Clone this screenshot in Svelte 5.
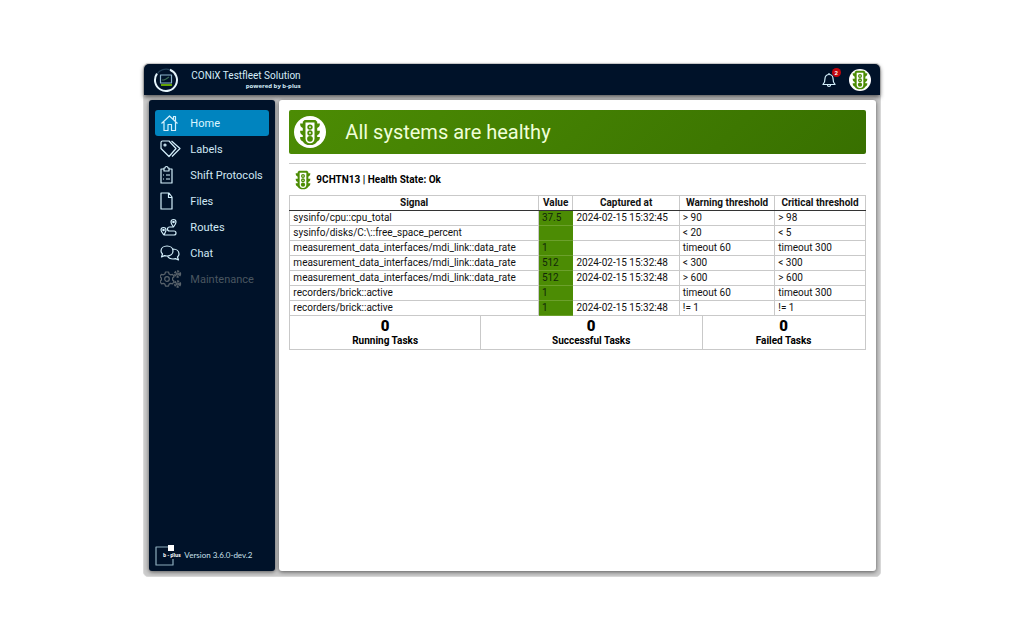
<script>
    const menu = [
        {name: 'Home', icon: 'home', active: true},
        {name: 'Labels', icon: 'labels'},
        {name: 'Shift Protocols', icon: 'protocols'},
        {name: 'Files', icon: 'files'},
        {name: 'Routes', icon: 'routes'},
        {name: 'Chat', icon: 'chat'},
        {name: 'Maintenance', icon: 'maintenance', disabled: true}
    ]

    const signals = [
        {signal: 'sysinfo/cpu::cpu_total', value: '37.5', captured: '2024-02-15 15:32:45', warning: '> 90', critical: '> 98'},
        {signal: 'sysinfo/disks/C:\\::free_space_percent', value: '', captured: '', warning: '< 20', critical: '< 5'},
        {signal: 'measurement_data_interfaces/mdi_link::data_rate', value: '1', captured: '', warning: 'timeout 60', critical: 'timeout 300'},
        {signal: 'measurement_data_interfaces/mdi_link::data_rate', value: '512', captured: '2024-02-15 15:32:48', warning: '< 300', critical: '< 300'},
        {signal: 'measurement_data_interfaces/mdi_link::data_rate', value: '512', captured: '2024-02-15 15:32:48', warning: '> 600', critical: '> 600'},
        {signal: 'recorders/brick::active', value: '1', captured: '', warning: 'timeout 60', critical: 'timeout 300'},
        {signal: 'recorders/brick::active', value: '1', captured: '2024-02-15 15:32:48', warning: '!= 1', critical: '!= 1'}
    ]

    const tasks = [
        {name: 'Running Tasks', count: 0},
        {name: 'Successful Tasks', count: 0},
        {name: 'Failed Tasks', count: 0}
    ]
</script>

{#snippet trafficLight()}
    <svg class="trafficLight" viewBox="0 0 24 30" aria-hidden="true">
        <path class="solid" d="M6 1h12l2 2v2h3c0 3-1 4-3 5v3h3c0 3-1 4-3 5v2h3c0 3-1 4-3 5-2 3-4 4-8 4s-6-1-8-4c-2-1-3-2-3-5h3v-2c-2-1-3-2-3-5h3v-3c-2-1-3-2-3-5h3V3z"/>
        <path class="hole" d="M7 4h10v18c0 3-2 5-5 5s-5-2-5-5z"/>
        <circle class="lamp" cx="12" cy="9" r="2"/>
        <circle class="lamp" cx="12" cy="15.500" r="2"/>
        <circle class="solid" cx="12" cy="22" r="3.200"/>
    </svg>
{/snippet}

{#snippet menuIcon(icon)}
    <svg class="menuIcon" viewBox="0 0 22 20" aria-hidden="true">
        {#if icon === 'home'}
            <path d="M1.500 10.500L9.500 3l8 7.500M4 9v8.500h4v-6h3.500v6h4V9M13.500 6V3.500h2V8"/>
        {:else if icon === 'labels'}
            <path d="M1 3.500Q1 2 2.500 2H9l7 7.500-7 8-8-8zM11.500 2l8.500 7.500-8 8"/>
            <circle cx="5" cy="6" r="1"/>
        {:else if icon === 'protocols'}
            <path d="M4 4H1v14h11V4h-3M4 3h1a1.500 1.500 0 0 1 3 0h1v3H4zM6 10h4M6 14h4M3 10h1M3 14h1"/>
        {:else if icon === 'files'}
            <path d="M1 2h8l3 4v12H1zM8.500 2v4.500H12"/>
        {:else if icon === 'routes'}
            <path d="M13.500 10C11.500 7.500 11 6.500 11 5a2.500 2.500 0 0 1 5 0c0 1.500-.5 2.500-2.500 5H9.500a2 2 0 0 0 0 4H14a2 2 0 0 1 0 4H4C2 15.500 1 14.500 1 13a2.500 2.500 0 0 1 5 0c0 1.500-1 2.500-2 5"/>
            <circle cx="13.500" cy="5" r=".7"/>
            <circle cx="3.500" cy="13" r=".7"/>
        {:else if icon === 'chat'}
            <path d="M13 8c0 3-2.500 5-6 5-1 0-1.500 0-2.500-.4L1.500 14l1-3C1.500 10 1 9 1 8c0-3 2.500-5 6-5s6 2 6 5zM13 6c3.500 0 6 2 6 5 0 1-.5 2-1.500 3l1 3-3-1.400c-1 .4-1.500.4-2.500.4-3 0-4.500-1-5.500-3"/>
        {:else}
            <circle cx="7" cy="10" r="2.300"/>
            <path d="M5.500 3h3l.6 2 1.500.8 2-.5 1.500 2.500L12.600 9v2l1.500 1.300-1.500 2.500-2-.5-1.500.8-.6 2h-3l-.6-2-1.500-.8-2 .5L0 12.300 1.400 11V9L0 7.800l1.400-2.500 2 .5L4.900 5z"/>
            <circle class="cog" cx="17.500" cy="5" r="2.700"/>
            <circle cx="17.500" cy="5" r="1"/>
            <circle class="cog" cx="17.500" cy="15" r="2.700"/>
            <circle cx="17.500" cy="15" r="1"/>
        {/if}
    </svg>
{/snippet}

<div class="window">
    <header>
        <svg class="logo" viewBox="0 0 26 26" aria-hidden="true">
            <path class="ringDim" d="M4 7A11 11 0 0 1 17 2.800"/>
            <path class="ring" d="M17 2.800A11 11 0 1 1 4 6.700"/>
            <rect class="screen" x="7.500" y="8" width="11" height="8"/>
            <path class="trace" d="M9 13h2l2-1 3-2"/>
            <path class="foot" d="M8 18h11"/>
        </svg>
        <div class="brand">
            <span class="title">CONiX Testfleet Solution</span>
            <span class="powered">powered by b-plus</span>
        </div>
        <button class="bell" aria-label="Notifications">
            <svg viewBox="0 0 14 16" aria-hidden="true">
                <path d="M7 1v1.500M1 12.500c1.500-1.500 2-3 2-6a4 4 0 0 1 8 0c0 3 .5 4.500 2 6zM5.500 13a1.500 1.500 0 0 0 3 0"/>
            </svg>
            <span class="badge">2</span>
        </button>
        <button class="state" aria-label="Health state">{@render trafficLight()}</button>
    </header>

    <div class="content">
        <nav>
            <ul>
                {#each menu as item}
                    <li>
                        <a href="#{item.icon}" class:active={item.active} class:disabled={item.disabled}
                            aria-disabled={item.disabled}>
                            {@render menuIcon(item.icon)}
                            <span>{item.name}</span>
                        </a>
                    </li>
                {/each}
            </ul>
            <div class="version">
                <svg viewBox="0 0 24 22" aria-hidden="true">
                    <path class="frame" d="M13 3H1v18h17v-6M18 10v-1"/>
                    <rect x="13" y="1" width="6" height="6"/>
                    <text x="8" y="13">b - plus</text>
                </svg>
                <span>Version 3.6.0-dev.2</span>
            </div>
        </nav>

        <main>
            <div class="banner">
                <div class="round">{@render trafficLight()}</div>
                <h1>All systems are healthy</h1>
            </div>
            <h2>{@render trafficLight()}9CHTN13 | Health State: Ok</h2>
            <table class="signals">
                <colgroup>
                    <col class="signalCol"><col class="valueCol"><col class="capturedCol"><col class="warningCol"><col>
                </colgroup>
                <thead>
                    <tr>
                        <th>Signal</th>
                        <th>Value</th>
                        <th>Captured at</th>
                        <th>Warning threshold</th>
                        <th>Critical threshold</th>
                    </tr>
                </thead>
                <tbody>
                    {#each signals as row}
                        <tr>
                            <td>{row.signal}</td>
                            <td class="ok">{row.value}</td>
                            <td>{row.captured}</td>
                            <td>{row.warning}</td>
                            <td>{row.critical}</td>
                        </tr>
                    {/each}
                </tbody>
            </table>
            <div class="tasks">
                {#each tasks as task}
                    <div class="task">
                        <strong>{task.count}</strong>
                        <span>{task.name}</span>
                    </div>
                {/each}
            </div>
        </main>
    </div>
</div>

<style>
    :global(body){
        background: #ffffff;
        font-family: Roboto, "Liberation Sans", sans-serif;
    }
    svg{
        display: block;
        fill: none;
        stroke: #d4f0fc;
        stroke-width: 1.2;
        stroke-linejoin: round;
        flex: none;
    }
    button{
        padding: 0;
        border: none;
        background: none;
    }
    .window{
        display: flex;
        flex-direction: column;
        box-sizing: border-box;
        min-height: calc(100vh - 126px);
        margin: 63px 14%;
        border: 1px solid #d9d9d9;
        border-radius: 5px;
        background: #cccccc;
    }

    header{
        display: flex;
        align-items: center;
        height: 31px;
        margin-bottom: 1px;
        padding: 0 9px;
        border-radius: 5px 5px 0 0;
        background: #001229;
        box-shadow: 0 2px 4px #555555;
    }
    .logo{
        width: 26px;
        height: 26px;
    }
    .logo .ring{
        stroke: #e4f4fc;
        stroke-width: 2;
    }
    .logo .ringDim{
        stroke: #24425a;
    }
    .logo .screen{
        stroke: #8cb4cc;
    }
    .logo .trace{
        stroke: #3c6c54;
    }
    .logo .foot{
        stroke: #64a404;
        stroke-width: 2;
    }
    .brand{
        display: flex;
        flex-direction: column;
        align-items: flex-end;
        margin-left: 12px;
        margin-right: auto;
        color: #d4ecf8;
    }
    .title{
        font-size: 10px;
        line-height: 12px;
    }
    .powered{
        font: bold 6px/8px "Open Sans", sans-serif;
    }
    .bell{
        position: relative;
        margin-right: 13px;
    }
    .bell svg{
        width: 14px;
        height: 16px;
    }
    .badge{
        position: absolute;
        top: -4px;
        right: -5px;
        width: 9px;
        height: 9px;
        border-radius: 50%;
        background: #c4040c;
        color: #ffffff;
        font: bold 6px/9px Roboto, sans-serif;
    }
    .state, .round{
        display: flex;
        align-items: center;
        justify-content: center;
        border-radius: 50%;
        background: #ffffff;
    }
    .state{
        width: 22px;
        height: 22px;
    }
    .trafficLight{
        width: 16px;
        height: 20px;
        stroke: none;
    }
    .trafficLight .solid{
        fill: #4c8c04;
    }
    .trafficLight .hole{
        fill: #ffffff;
    }
    .trafficLight .lamp{
        stroke: #4c8c04;
        stroke-width: 2;
    }

    .content{
        display: flex;
        flex: 1;
        gap: 4px;
        padding: 4px 4px 5px 5px;
    }
    nav{
        display: flex;
        flex-direction: column;
        justify-content: space-between;
        flex: none;
        box-sizing: border-box;
        width: 126px;
        padding: 10px 6px 5px;
        border-radius: 3px;
        background: #001229;
        box-shadow: 0 1px 4px #555555;
    }
    nav ul{
        margin: 0;
        padding: 0;
        list-style: none;
    }
    nav a{
        display: flex;
        align-items: center;
        gap: 8px;
        height: 26px;
        padding-left: 5px;
        border-radius: 3px;
        color: #d0e8f4;
        font-size: 11px;
        text-decoration: none;
        white-space: nowrap;
    }
    nav a.active{
        background: #0084bf;
        color: #dcf7ff;
    }
    nav a.disabled{
        color: #4a5660;
    }
    .menuIcon{
        width: 22px;
        height: 20px;
    }
    .disabled svg{
        stroke: #5a646c;
    }
    .cog{
        stroke-width: 2;
        stroke-dasharray: 2 1;
    }
    .version{
        display: flex;
        align-items: center;
        gap: 5px;
        color: #c9e0ec;
        font: 8px/22px Lato, sans-serif;
        white-space: nowrap;
    }
    .version svg{
        width: 24px;
        height: 22px;
        overflow: visible;
    }
    .version .frame{
        stroke: #8cacbc;
    }
    .version rect, .version text{
        fill: #ffffff;
        stroke: none;
    }
    .version text{
        font: bold 5px "Open Sans", sans-serif;
    }

    main{
        flex: 1;
        min-width: 0;
        padding: 10px;
        border-radius: 3px;
        background: #ffffff;
        box-shadow: 0 1px 4px #555555;
    }
    .banner{
        display: flex;
        align-items: center;
        height: 44px;
        padding-left: 5px;
        border-radius: 2px;
        background: linear-gradient(135deg, #4c8c04, #387000);
    }
    .round{
        width: 32px;
        height: 32px;
    }
    .round .trafficLight{
        width: 22px;
        height: 27px;
    }
    h1{
        margin: 0 0 0 19px;
        color: #f0ffd8;
        font-size: 20px;
        font-weight: 400;
    }
    h2{
        display: flex;
        align-items: center;
        gap: 5px;
        height: 31px;
        margin: 9px 0 0;
        padding-left: 6px;
        border-top: 1px solid #c9c9c9;
        color: #000000;
        font-size: 10px;
        font-weight: 700;
    }
    .signals{
        width: 100%;
        border-collapse: collapse;
        table-layout: fixed;
        color: #111111;
        font-size: 10px;
        line-height: 14px;
    }
    .signalCol{
        width: 43.2%;
    }
    .valueCol{
        width: 6%;
    }
    .capturedCol{
        width: 18.5%;
    }
    .warningCol{
        width: 16.6%;
    }
    th, td{
        height: 14px;
        padding: 0 3px;
        border: 1px solid #c9c9c9;
        white-space: nowrap;
    }
    th{
        border-bottom: 1px solid #333333;
        text-align: center;
    }
    .signals .ok{
        border-left-color: #4c8c04;
        border-right-color: #4c8c04;
        border-bottom-color: #6ca02c;
        background: #4c8c04;
        color: #12280a;
    }
    .tasks{
        display: grid;
        grid-template-columns: 33% 38.6% 1fr;
        border: 1px solid #c9c9c9;
        border-top: none;
    }
    .task{
        display: flex;
        flex-direction: column;
        align-items: center;
        padding: 2px 0 1px;
        color: #000000;
        font-size: 10px;
        font-weight: 700;
        line-height: 14px;
    }
    .task + .task{
        border-left: 1px solid #c9c9c9;
    }
    .task strong{
        font-size: 15px;
        line-height: 16px;
    }
</style>
